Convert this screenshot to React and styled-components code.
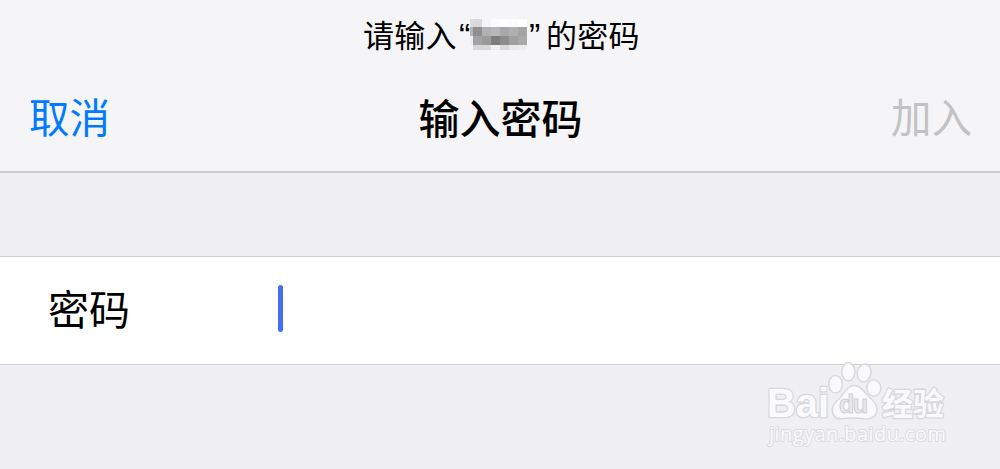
import React from "react";
import styled, { createGlobalStyle } from "styled-components";

const mosaic = [
  ["#dddde0", "#d9d9dc", "#f5f5f7", "#fbfbfc", "#fdfdfd", "#fbfbfc", "#ffffff"],
  ["#b5b5b6", "#8f8f8f", "#b0b0b0", "#b7b7b7", "#a7a8ab", "#b0b0b1", "#a4a4a4"],
  ["#eeeeef", "#a3a3a3", "#9b9b9b", "#7d7d7d", "#8d8d8d", "#a0a0a0", "#a9a9aa"],
  ["#f5f5f7", "#d8d8da", "#d8d8da", "#efeff0", "#dadadb", "#e9e9eb", "#ececee"],
];

const App = () => {
  return (
    <Screen>
      <GlobalStyle />
      <Header>
        <Prompt>
          <PromptText>请输入</PromptText>
          <Quote>“</Quote>
          <Mosaic>
            {mosaic.flat().map((color, i) => (
              <Cell key={i} $color={color} />
            ))}
          </Mosaic>
          <Quote $closing>”</Quote>
          <PromptText>的密码</PromptText>
        </Prompt>
        <NavBar>
          <NavButton $color="#007aff">取消</NavButton>
          <Title>输入密码</Title>
          <NavButton $color="#c2c2c4" $end disabled>
            加入
          </NavButton>
        </NavBar>
      </Header>
      <Row>
        <Label>密码</Label>
        <Caret />
      </Row>
      <Watermark viewBox="0 0 200 100">
        <Mark fontSize="41" x="17" y="67" textLength="62" lengthAdjust="spacingAndGlyphs">
          Bai
        </Mark>
        <Paw>
          <ellipse cx="85.5" cy="34.2" rx="6.8" ry="8.8" />
          <ellipse cx="98.3" cy="21.8" rx="6.5" ry="9.2" />
          <ellipse cx="114.2" cy="23" rx="6.8" ry="9" transform="rotate(12 114.2 23)" />
          <ellipse cx="123.8" cy="38" rx="7" ry="8.3" />
          <path d="M104 35.5C97 35.5 95 43 89 49C84 53 81.5 57 82.5 62C83.5 67.5 88 69.5 94 68.5C101 67.8 107 67.8 114 68.8C121 69.5 126 67 127 61C128 55 124 51 119 47C114 42 111 35.5 104 35.5Z" />
        </Paw>
        <Du x="89" y="63" textLength="29">
          du
        </Du>
        <Mark $cjk fontSize="31" x="132" y="65" textLength="62">
          经验
        </Mark>
        <Url x="19" y="91" textLength="177">
          jingyan.baidu.com
        </Url>
      </Watermark>
    </Screen>
  );
};

export default App;

const GlobalStyle = createGlobalStyle`
  * {
    box-sizing: border-box;
  }
  body {
    margin: 0;
    background-color: #efeff4;
    font-family: "Noto Sans CJK SC", sans-serif;
    overflow: hidden;
  }
`;

const Screen = styled.div`
  position: relative;
  width: 1000px;
  height: 469px;
  overflow: hidden;
  background-color: #efeff4;
`;

const Header = styled.header`
  height: 173px;
  background-color: #f5f5f7;
  border-bottom: 2px solid #cbcbd0;
`;

const Prompt = styled.div`
  display: flex;
  height: 67px;
  padding-left: 363px;
  font-size: 31px;
  line-height: 67px;
  color: #000;
`;

const PromptText = styled.span`
  width: 94px;
  letter-spacing: 0.3px;
  white-space: nowrap;
`;

const Quote = styled.span`
  width: ${(props) => (props.$closing ? "19px" : "13px")};
  padding-left: 2px;
  font-family: "Liberation Sans", sans-serif;
  font-size: 34px;
  line-height: 70px;
`;

const Mosaic = styled.div`
  display: grid;
  grid-template-columns: 3px repeat(6, 9px);
  grid-template-rows: 8px 9px 9px 5px;
  width: 57px;
  height: 31px;
  margin-top: 19px;
`;

const Cell = styled.span`
  background-color: ${(props) => props.$color};
`;

const NavBar = styled.nav`
  display: grid;
  grid-template-columns: 1fr auto 1fr;
  align-items: center;
  height: 98px;
  padding: 0 28px 0 29px;
`;

const NavButton = styled.button`
  justify-self: ${(props) => (props.$end ? "end" : "start")};
  padding: 0;
  border: none;
  background: none;
  font-family: inherit;
  font-size: 40.5px;
  line-height: 60px;
  color: ${(props) => props.$color};
`;

const Title = styled.h1`
  margin: 0;
  font-size: 41px;
  font-weight: 500;
  line-height: 60px;
  color: #000;
`;

const Row = styled.div`
  display: flex;
  align-items: center;
  height: 109px;
  margin-top: 83px;
  padding-left: 48px;
  background-color: #fff;
  border-top: 1px solid #d0d0d3;
  border-bottom: 1px solid #d0d0d3;
`;

const Label = styled.label`
  width: 230px;
  padding-bottom: 7px;
  font-size: 41px;
  line-height: 60px;
  color: #000;
`;

const Caret = styled.span`
  width: 5px;
  height: 47px;
  margin-bottom: 4px;
  border-radius: 3px;
  background-color: #456ff0;
`;

const Watermark = styled.svg`
  position: absolute;
  left: 750px;
  top: 350px;
  width: 200px;
  height: 100px;
  overflow: visible;
`;

const Paw = styled.g`
  fill: #fafafc;
  stroke: #d9d9dd;
  stroke-width: 1.5px;
`;

const Mark = styled.text`
  font-family: ${(props) =>
    props.$cjk ? '"Noto Sans CJK SC", sans-serif' : '"Liberation Sans", sans-serif'};
  font-weight: bold;
  fill: #fafafc;
  stroke: #d7d7dc;
  stroke-width: 2.6px;
  stroke-linejoin: round;
  paint-order: stroke;
`;

const Du = styled.text`
  font-family: "Liberation Sans", sans-serif;
  font-size: 25px;
  font-weight: bold;
  fill: #e9e9ed;
  stroke: #d0d0d5;
  stroke-width: 1px;
`;

const Url = styled.text`
  font-family: "Open Sans", sans-serif;
  font-size: 20px;
  fill: #fafafc;
  stroke: #dcdce0;
  stroke-width: 2px;
  stroke-linejoin: round;
  paint-order: stroke;
`;
